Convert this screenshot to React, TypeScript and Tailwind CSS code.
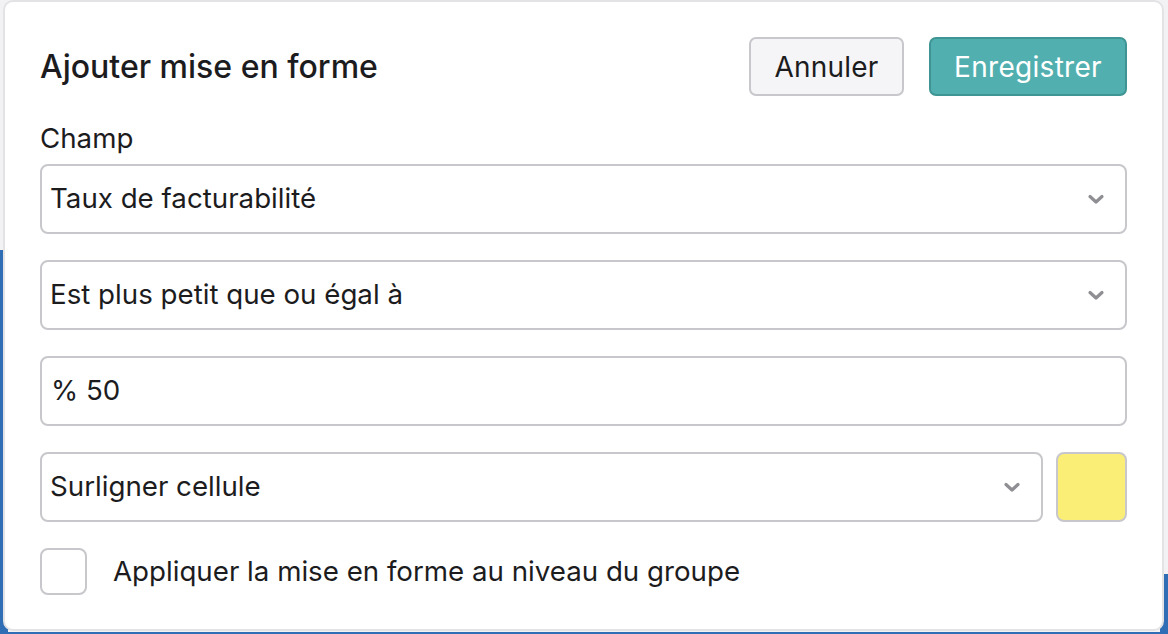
import React from 'react';

function Chevron() {
  return (
    <svg width="18" height="12" viewBox="0 0 18 12" fill="none" className="shrink-0">
      <path d="M3 3.5 L9 9 L15 3.5" stroke="#8e8e93" strokeWidth="3.2" strokeLinecap="round" strokeLinejoin="round" />
    </svg>
  );
}

function SelectBox({ value, className = '' }: { value: string; className?: string }) {
  return (
    <div
      className={`flex h-[70px] items-center justify-between rounded-[8px] border-2 border-[#c7c7cc] bg-white pl-[8px] pr-[20px] ${className}`}
    >
      <span className="text-[27.7px] text-[#1c1c1e]">{value}</span>
      <Chevron />
    </div>
  );
}

export default function App() {
  return (
    <div className="relative h-[634px] w-[1168px] overflow-hidden bg-[#f2f2f4]" style={{ fontFamily: 'Inter, "Noto Sans", sans-serif' }}>
      {/* page behind the dialog */}
      <div className="absolute left-0 top-[250px] h-[384px] w-[8px] bg-[#2f6db5]" />
      <div className="absolute right-0 top-[574px] h-[60px] w-[8px] bg-[#2f6db5]" />
      <div className="absolute bottom-0 left-0 h-[2px] w-full bg-[#2f6db5]" />

      <div className="relative ml-[3px] flex h-[631px] w-[1161px] flex-col rounded-[10px] border-2 border-[#e3e3e6] bg-white px-[35px] pt-[35px]">
        <div className="flex items-center justify-between">
          <h1 className="text-[32px] font-medium leading-none text-[#1c1c1e]">Ajouter mise en forme</h1>
          <div className="flex gap-[25px]">
            <button className="h-[59px] w-[155px] rounded-[7px] border-2 border-[#c7c7cc] bg-[#f5f5f7] text-[28px] tracking-[0.2px] text-[#1c1c1e]">
              Annuler
            </button>
            <button className="h-[59px] w-[198px] rounded-[7px] border-2 border-[#3f9494] bg-[#52afaf] text-[28px] tracking-[0.3px] text-white">
              Enregistrer
            </button>
          </div>
        </div>

        <label className="mt-[26px] text-[27.7px] leading-[32px] text-[#1c1c1e]">Champ</label>
        <div className="mt-[10px] flex flex-col gap-[26px]">
          <SelectBox value="Taux de facturabilité" />
          <SelectBox value="Est plus petit que ou égal à" />
          <div className="flex h-[70px] items-center rounded-[8px] border-2 border-[#c7c7cc] bg-white pl-[9px]">
            <span className="text-[27.7px] text-[#1c1c1e]">% 50</span>
          </div>
          <div className="flex gap-[13px]">
            <SelectBox value="Surligner cellule" className="flex-1" />
            <div className="h-[70px] w-[71px] rounded-[8px] border-2 border-[#c7c7cc] bg-[#fbee76]" />
          </div>
          <div className="flex items-center gap-[26px]">
            <div className="h-[47px] w-[47px] rounded-[8px] border-2 border-[#c7c7cc] bg-white" />
            <span className="text-[27.7px] text-[#1c1c1e]">Appliquer la mise en forme au niveau du groupe</span>
          </div>
        </div>
      </div>
    </div>
  );
}
